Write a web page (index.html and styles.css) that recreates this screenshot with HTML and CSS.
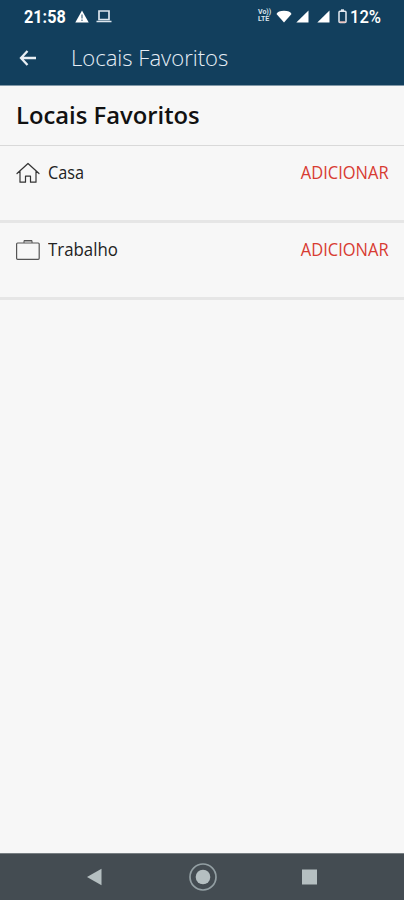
FILE: index.html
```html
<!DOCTYPE html>
<html lang="pt">
<head>
<meta charset="utf-8">
<title>Locais Favoritos</title>
<link rel="stylesheet" href="styles.css">
</head>
<body>
<header class="top">
  <div class="status">
    <span class="clock">21:58</span>
    <svg class="warn" width="14" height="13" viewBox="0 0 14 13"><path d="M7 .5 13.7 12.5H.3Z" fill="#fff"/><path d="M7 4.600v4M7 9.600v1.400" stroke="#456982" stroke-width="1.200"/></svg>
    <svg class="laptop" width="16" height="13" viewBox="0 0 16 13"><path d="M3 1h10v8.500H3zM.5 11.500h15" fill="none" stroke="#dce5ed" stroke-width="1.700"/></svg>
    <span class="volte"><span>Vo))</span><span>LTE</span></span>
    <svg class="wifi" width="16" height="13" viewBox="0 0 16 13"><path d="M.5 4Q2 .800 8 .800T15.500 4L8 12.500Z" fill="#fff"/></svg>
    <svg class="signal" width="13" height="13" viewBox="0 0 13 13"><path d="M12.500.500v12H.300Z" fill="#fff"/></svg>
    <svg class="signal second" width="13" height="13" viewBox="0 0 13 13"><path d="M12.500.500v12H.300Z" fill="#fff"/></svg>
    <svg class="battery" width="9" height="15" viewBox="0 0 9 15"><rect x="1" y="2.300" width="7" height="11.200" rx="1" fill="none" stroke="#e5ebf2" stroke-width="1.500"/><path d="M3 1.200h3" stroke="#e5ebf2" stroke-width="1.800"/><path d="M1.500 13h6" stroke="#efb6ad" stroke-width="1.300"/></svg>
    <span class="percent">12%</span>
  </div>
  <div class="appbar">
    <svg class="back" width="18" height="18" viewBox="0 0 18 18"><path d="M8.500 2 2 9l6.500 7M2.300 9H17" fill="none" stroke="#e8eef4" stroke-width="2.300"/></svg>
    <span class="bar-title">Locais Favoritos</span>
  </div>
</header>
<main>
  <h1><span>Locais Favoritos</span></h1>
  <section class="row">
    <svg width="24" height="22" viewBox="0 0 24 22"><path d="M1 11.500 12 1.500l11 10M4 9.500v10.700h5.500v-6h5v6H20V9.500" fill="none" stroke="#333" stroke-width="1.200" stroke-linejoin="round" stroke-linecap="round"/></svg>
    <span class="name casa">Casa</span>
    <a class="add">ADICIONAR</a>
  </section>
  <section class="row">
    <svg width="24" height="22" viewBox="0 0 24 22"><rect x=".6" y="4" width="22.600" height="16.300" rx="1" fill="none" stroke="#555" stroke-width="1.200"/><path d="M8 4V1.500h8V4" fill="#aaa" stroke="#555" stroke-width="1"/></svg>
    <span class="name">Trabalho</span>
    <a class="add">ADICIONAR</a>
  </section>
</main>
<nav>
  <svg width="15" height="18" viewBox="0 0 15 18"><path d="M0 9 14.500.700v16.600Z" fill="#b5bfc1"/></svg>
  <svg width="28" height="28" viewBox="0 0 28 28"><circle cx="14" cy="14" r="13" fill="none" stroke="#939fa3" stroke-width="1.700"/><circle cx="14" cy="14" r="7.300" fill="#b5bfc1"/></svg>
  <svg width="15" height="16" viewBox="0 0 15 16"><path d="M0 .500h15v15H0z" fill="#b5bfc1"/></svg>
</nav>
</body>
</html>
```
FILE: styles.css
```css
* { box-sizing: border-box; }
body {
  margin: 0;
  height: 900px;
  display: flex;
  flex-direction: column;
  background: #f7f7f7;
  font-family: "Open Sans", "Noto Sans", sans-serif;
  color: #222;
}
svg { display: block; flex: none; }
span, a { white-space: nowrap; transform-origin: left center; }
.top {
  height: 86px;
  background: #123f5d;
  border-bottom: 1px solid #8299a8;
}
.status {
  height: 32px;
  display: flex;
  align-items: center;
  padding-left: 24px;
  color: #fff;
  font-family: Roboto, sans-serif;
}
.clock { width: 51px; padding-top: 1px; font-size: 18px; font-weight: 700; transform: scaleX(.9); }
.laptop { margin-left: 7px; }
.volte {
  width: 20px;
  margin-left: 146px;
  display: flex;
  flex-direction: column;
  font-size: 7px;
  line-height: 7px;
  font-weight: 700;
  color: #dce5ed;
}
.wifi { margin-left: -2px; }
.signal { margin-left: 4px; }
.signal.second { margin-left: 8px; }
.battery { margin-left: 8px; }
.percent { margin-left: 3px; padding-top: 1px; font-size: 18px; font-weight: 500; transform: scaleX(.92); }
.appbar {
  height: 50px;
  display: flex;
  align-items: center;
  padding-left: 19px;
}
.back { margin-top: 2px; }
.bar-title {
  margin-left: 34px;
  font-size: 21.500px;
  font-weight: 300;
  color: #e6eef6;
  transform: scaleX(1.025);
}
main { flex: 1; }
h1 {
  margin: 0;
  height: 60px;
  display: flex;
  align-items: center;
  padding: 0 0 2px 16px;
  border-bottom: 1px solid #d9d9d9;
  font-size: 23px;
  font-weight: 600;
  color: #111;
}
h1 span { transform: scaleX(1.035); }
.row {
  height: 77px;
  display: flex;
  align-items: flex-start;
  padding: 16px 15px 0 16px;
  border-bottom: 3px solid #e6e6e6;
}
.name, .add { margin-top: -1px; font-size: 18.500px; line-height: 22px; }
.name { margin-left: 8px; transform: scaleX(.91); }
.casa { transform: scaleX(.88); }
.add {
  margin-left: auto;
  color: #d83b32;
  transform: scaleX(.89);
  transform-origin: right center;
}
nav {
  height: 47px;
  display: flex;
  align-items: center;
  background: #444c52;
  border-top: 1px solid #777e82;
  padding-left: 87px;
}
nav svg + svg { margin-left: 87px; }
nav svg:last-child { margin-left: 85px; }
```
